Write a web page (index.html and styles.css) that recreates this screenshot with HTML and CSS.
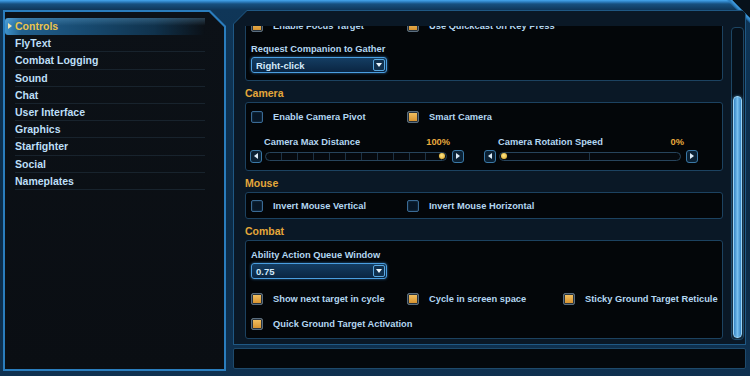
FILE: index.html
```html
<!DOCTYPE html>
<html>
<head>
<meta charset="utf-8">
<title>Preferences - Controls</title>
<link rel="stylesheet" href="styles.css">
</head>
<body>
<div class="frame">
  <nav class="nav">
    <div class="nav-in">
      <ul class="menu">
        <li class="item active"><span class="caret"></span>Controls</li>
        <li class="item">FlyText</li>
        <li class="item">Combat Logging</li>
        <li class="item">Sound</li>
        <li class="item">Chat</li>
        <li class="item">User Interface</li>
        <li class="item">Graphics</li>
        <li class="item">Starfighter</li>
        <li class="item">Social</li>
        <li class="item">Nameplates</li>
      </ul>
    </div>
  </nav>
  <main class="main">
    <div class="pane">
      <div class="pane-in">
        <div class="view">
          <section class="box box-first">
            <div class="checks">
              <div class="check"><span class="cb on"></span>Enable Focus Target</div>
              <div class="check"><span class="cb on"></span>Use Quickcast on Key Press</div>
            </div>
            <div class="field-label">Request Companion to Gather</div>
            <div class="select"><span>Right-click</span><span class="sel-btn"></span></div>
          </section>

          <h3 class="head">Camera</h3>
          <section class="box box-camera">
            <div class="checks">
              <div class="check"><span class="cb"></span>Enable Camera Pivot</div>
              <div class="check"><span class="cb on"></span>Smart Camera</div>
            </div>
            <div class="sliders">
              <div class="slider">
                <div class="slider-top"><span>Camera Max Distance</span><span class="val">100%</span></div>
                <div class="slider-row">
                  <span class="arrow left"></span>
                  <span class="track ticks full"><span class="knob"></span></span>
                  <span class="arrow right"></span>
                </div>
              </div>
              <div class="slider">
                <div class="slider-top"><span>Camera Rotation Speed</span><span class="val">0%</span></div>
                <div class="slider-row">
                  <span class="arrow left"></span>
                  <span class="track half"><span class="knob"></span></span>
                  <span class="arrow right"></span>
                </div>
              </div>
            </div>
          </section>

          <h3 class="head">Mouse</h3>
          <section class="box box-mouse">
            <div class="checks">
              <div class="check"><span class="cb"></span>Invert Mouse Vertical</div>
              <div class="check"><span class="cb"></span>Invert Mouse Horizontal</div>
            </div>
          </section>

          <h3 class="head">Combat</h3>
          <section class="box box-combat">
            <div class="field-label">Ability Action Queue Window</div>
            <div class="select"><span>0.75</span><span class="sel-btn"></span></div>
            <div class="checks combat-checks">
              <div class="check"><span class="cb on"></span>Show next target in cycle</div>
              <div class="check"><span class="cb on"></span>Cycle in screen space</div>
              <div class="check"><span class="cb on"></span>Sticky Ground Target Reticule</div>
              <div class="check"><span class="cb on"></span>Quick Ground Target Activation</div>
            </div>
          </section>
        </div>
        <div class="scrollbar"><div class="thumb"></div></div>
      </div>
    </div>
    <div class="footer"></div>
  </main>
</div>
</body>
</html>
```
FILE: styles.css
```css
* { box-sizing: border-box; margin: 0; padding: 0; }
html, body { width: 750px; height: 376px; overflow: hidden; }
body {
  background: #07111a;
  font-family: "Liberation Sans", Arial, sans-serif;
  font-weight: 700;
}

.frame {
  display: flex;
  height: 376px;
  padding-right: 2px;
  background:
    linear-gradient(225deg, transparent 12.5px, #46a8ee 12.5px, #2c7cbc 15px, transparent 17px) top right / 34px 34px no-repeat,
    linear-gradient(#46a8ee 0, #2c7cbc 2px, #17507e 4px, #0f3658 10px, #0c2b46 60%, #0f3150 100%);
  clip-path: polygon(0 0, 732px 0, 750px 18px, 750px 376px, 0 376px);
}

/* ---------- left navigation ---------- */
.nav {
  width: 223px;
  margin: 10px 0 5px 3px;
  padding: 2px;
  background: #2a7dbd;
  clip-path: polygon(0 0, calc(100% - 16px) 0, 100% 16px, 100% 100%, 0 100%);
}
.nav-in {
  height: 100%;
  padding-top: 6px;
  background: linear-gradient(#0c1117, #0a0e13);
  clip-path: polygon(0 0, calc(100% - 15px) 0, 100% 15px, 100% 100%, 0 100%);
}
.menu { list-style: none; margin-right: 19px; }
.item {
  height: 17.2px;
  line-height: 17px;
  padding-left: 10px;
  font-size: 10.5px;
  color: #bddff7;
  white-space: nowrap;
  background: linear-gradient(#18232d, #18232d) no-repeat 10px 100% / calc(100% - 10px) 1px;
}
.item.active {
  color: #ecc44c;
  border-radius: 3px 0 0 3px;
  background:
    linear-gradient(rgba(140, 210, 255, 0.25), rgba(140, 210, 255, 0) 45%),
    linear-gradient(90deg, #3f93cc 0, #22608e 8%, #174a70 40%, #10324c 75%, rgba(12, 30, 44, 0) 100%);
}
.caret {
  display: inline-block;
  vertical-align: 1px;
  margin-left: -7px;
  margin-right: 3px;
  border-top: 3px solid transparent;
  border-bottom: 3px solid transparent;
  border-left: 4px solid #f2e6b0;
}

/* ---------- main panel ---------- */
.main {
  flex: 1;
  display: flex;
  flex-direction: column;
  gap: 3px;
  margin-left: 5px;
  padding: 10px 2px 7px 2px;
}
.pane {
  height: 335px;
  padding: 1px;
  background: #1f5884;
  clip-path: polygon(14px 0, 100% 0, 100% 100%, 0 100%, 0 14px);
}
.pane-in {
  height: 100%;
  display: flex;
  align-items: flex-start;
  padding-top: 15px;
  background: #0a1826;
  clip-path: polygon(13px 0, 100% 0, 100% 100%, 0 100%, 0 13px);
}
.view {
  width: 478px;
  height: 316px;
  margin-left: 11px;
  overflow: hidden;
}
.scrollbar {
  width: 13px;
  height: 313px;
  margin: 1px 0 0 8px;
  padding: 1px;
  border: 1px solid #1d4664;
  border-radius: 4px;
  background: #06101a;
  display: flex;
  flex-direction: column;
  justify-content: flex-end;
}
.thumb {
  height: 242px;
  border: 1px solid #9ad4f6;
  border-radius: 4px;
  background: linear-gradient(90deg, #3584c4, #78c0ee 50%, #3584c4);
  box-shadow: 0 0 3px rgba(90, 180, 240, 0.6);
}
.footer {
  height: 21px;
  background: #04080c;
  border: 1px solid #1e4a6c;
  border-radius: 2px;
}

/* ---------- sections ---------- */
.box {
  background: #030609;
  border: 1px solid #1c4260;
  border-radius: 3px;
  padding: 0 5px;
}
.box-first { margin-top: -9px; padding-bottom: 7px; }
.box-camera { padding-top: 6px; padding-bottom: 7px; }
.box-mouse { padding-top: 5px; padding-bottom: 4px; }
.box-combat { padding-top: 8px; padding-bottom: 6px; }

.head {
  height: 21px;
  padding-top: 6px;
  font-size: 10.5px;
  line-height: 12px;
  color: #e4a73a;
}

.checks {
  display: grid;
  grid-template-columns: repeat(3, 156px);
  row-gap: 9px;
}
.combat-checks { margin-top: 12px; }
.check {
  display: flex;
  align-items: center;
  gap: 10px;
  height: 16px;
  font-size: 9.3px;
  color: #b3d7f1;
  white-space: nowrap;
}
.cb {
  flex: none;
  width: 12px;
  height: 12px;
  border: 1px solid #3a6a94;
  border-radius: 2px;
  background: #071626;
  box-shadow: inset 0 0 2px rgba(60, 120, 170, 0.5);
}
.cb.on {
  border-color: #5a6d7e;
  background: linear-gradient(#f4c466, #d48e2a);
  box-shadow: inset 0 0 0 1px #27323d;
}

.field-label {
  margin-top: 9px;
  height: 12px;
  line-height: 12px;
  font-size: 9.3px;
  color: #b3d7f1;
}
.box-combat .field-label { margin-top: 0; }

.select {
  width: 136px;
  height: 16px;
  margin-top: 2px;
  padding: 0 1px 0 4px;
  border: 1px solid #4a9ee0;
  border-radius: 3px;
  background: linear-gradient(#143d62, #0a2542);
  box-shadow: 0 0 3px rgba(70, 160, 240, 0.6);
  display: flex;
  align-items: center;
  justify-content: space-between;
  font-size: 9.5px;
  color: #d2e9fa;
}
.sel-btn {
  width: 12px;
  height: 12px;
  border: 1px solid #5aa8e0;
  border-radius: 2px;
  background: #10304e;
  display: flex;
  align-items: center;
  justify-content: center;
}
.sel-btn::before {
  content: "";
  border-left: 3px solid transparent;
  border-right: 3px solid transparent;
  border-top: 4px solid #eaf5fd;
}

/* ---------- sliders ---------- */
.sliders {
  display: flex;
  gap: 20px;
  margin: 11px 0 0 -1px;
}
.slider { width: 214px; }
.slider-top {
  display: flex;
  justify-content: space-between;
  padding: 0 14px;
  height: 12px;
  line-height: 12px;
  font-size: 9.3px;
  color: #b3d7f1;
}
.val { color: #e9ab3d; }
.slider-row {
  display: flex;
  align-items: center;
  gap: 3px;
  height: 14px;
  margin-top: 1px;
}
.arrow {
  flex: none;
  width: 12px;
  height: 13px;
  border: 1px solid #3a78a6;
  border-radius: 3px;
  background: #0b2134;
  display: flex;
  align-items: center;
  justify-content: center;
}
.arrow.left::before {
  content: "";
  border-top: 3px solid transparent;
  border-bottom: 3px solid transparent;
  border-right: 4px solid #dcecf8;
}
.arrow.right::before {
  content: "";
  border-top: 3px solid transparent;
  border-bottom: 3px solid transparent;
  border-left: 4px solid #dcecf8;
}
.track {
  flex: 1;
  height: 9px;
  margin-right: 2px;
  padding: 0 1px;
  border: 1px solid #27445c;
  border-radius: 5px;
  background: #05090e;
  display: flex;
  align-items: center;
}
.track.ticks {
  background: repeating-linear-gradient(90deg, transparent 0 15px, #1d3244 15px 16px), #05090e;
}
.track.half {
  background: linear-gradient(90deg, transparent calc(50% - 1px), #1d3244 calc(50% - 1px) 50%, transparent 50%), #05090e;
}
.track.full { justify-content: flex-end; }
.knob {
  width: 6px;
  height: 6px;
  border-radius: 50%;
  background: radial-gradient(circle at 45% 40%, #ffe888, #d9a022);
  box-shadow: 0 0 1px #6a5010;
}
```
